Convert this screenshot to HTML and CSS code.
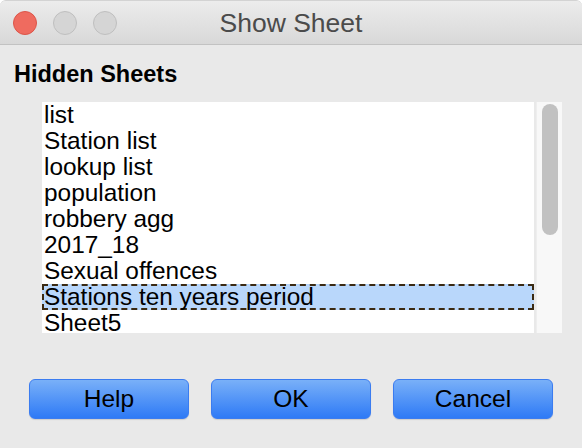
FILE: index.html
```html
<!DOCTYPE html>
<html>
<head>
<meta charset="utf-8">
<link rel="stylesheet" href="styles.css">
</head>
<body>
<div class="window">
  <div class="titlebar">
    <div class="lights">
      <span class="light close"></span>
      <span class="light min"></span>
      <span class="light max"></span>
    </div>
    <div class="title">Show Sheet</div>
    <div></div>
  </div>
  <div class="content">
    <div class="heading">Hidden Sheets</div>
    <div class="listwrap">
      <div class="list">
        <div class="row">list</div>
        <div class="row">Station list</div>
        <div class="row">lookup list</div>
        <div class="row">population</div>
        <div class="row">robbery agg</div>
        <div class="row">2017_18</div>
        <div class="row">Sexual offences</div>
        <div class="row selected">Stations ten years period</div>
        <div class="row">Sheet5</div>
      </div>
      <div class="scrollbar"><div class="thumb"></div></div>
    </div>
    <div class="buttons">
      <button class="btn">Help</button>
      <button class="btn">OK</button>
      <button class="btn">Cancel</button>
    </div>
  </div>
</div>
</body>
</html>
```
FILE: styles.css
```css
html, body {
  margin: 0;
  padding: 0;
  background: #ffffff;
}
body {
  width: 582px;
  height: 448px;
  overflow: hidden;
  font-family: "Liberation Sans", Arial, sans-serif;
}
.window {
  width: 582px;
  height: 448px;
  background: #e9e9e9;
  border-radius: 6px 6px 0 0;
  overflow: hidden;
  box-sizing: border-box;
  border-top: 1px solid #d3d3d3;
}
.titlebar {
  height: 43px;
  display: grid;
  grid-template-columns: 1fr auto 1fr;
  align-items: center;
  background: linear-gradient(#ececec, #d8d8d8);
  border-bottom: 1px solid #c2c2c2;
}
.lights {
  display: flex;
  align-items: center;
  padding-left: 13px;
  gap: 16px;
}
.light {
  width: 22px;
  height: 22px;
  border-radius: 50%;
  background: #d5d5d5;
  border: 1px solid #bfbfbf;
}
.light.close {
  background: #ef6b5f;
  border-color: #dc5549;
}
.title {
  font-size: 26.5px;
  color: #4b4b4b;
  line-height: 30px;
  padding-top: 1px;
}
.content {
  padding-top: 15px;
}
.heading {
  padding-left: 14px;
  font-size: 23.5px;
  font-weight: bold;
  line-height: 28px;
  color: #000;
}
.listwrap {
  margin-top: 14px;
  margin-left: 42px;
  display: flex;
  height: 231px;
  width: 520px;
}
.list {
  width: 492px;
  background: #ffffff;
  overflow: hidden;
}
.row {
  height: 26px;
  line-height: 25px;
  padding-bottom: 1px;
  font-size: 24.4px;
  color: #000;
  padding-left: 2px;
  white-space: nowrap;
  box-sizing: border-box;
}
.row.selected {
  background: #b9d7fb;
  border: 2px dashed #3b2a12;
  padding-left: 0;
  padding-bottom: 0;
  line-height: 21px;
  height: 26px;
}
.scrollbar {
  margin-left: 2px;
  width: 26px;
  background: #f8f8f8;
  border-left: 1px solid #eeeeee;
  box-sizing: border-box;
  padding: 2px 0 0 5px;
}
.thumb {
  width: 16px;
  height: 131px;
  border-radius: 8px;
  background: #c1c1c1;
}
.buttons {
  margin-top: 46px;
  padding-left: 29px;
  display: flex;
  gap: 22px;
}
.btn {
  width: 160px;
  height: 40px;
  border-radius: 6px;
  border: 1px solid #3b7cf0;
  background: linear-gradient(#79b0f8, #2e7af6);
  font-family: "Liberation Sans", Arial, sans-serif;
  font-size: 24.5px;
  color: #000;
  padding: 0;
  line-height: 38px;
  box-shadow: 0 1px 1px rgba(0,0,0,0.12);
}
```
